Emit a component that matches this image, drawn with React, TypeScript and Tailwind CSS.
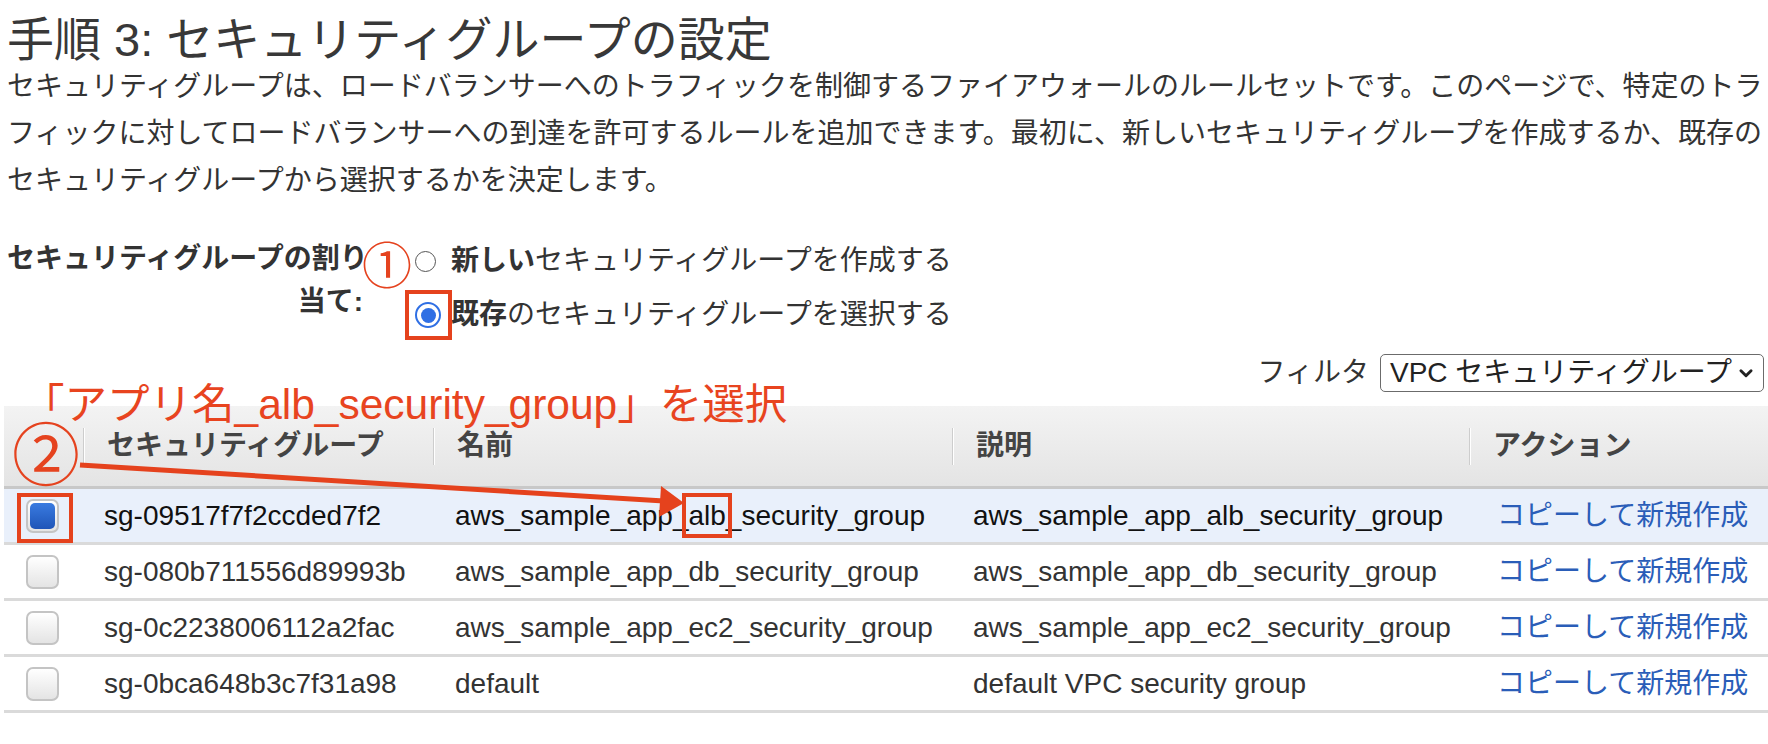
import React from 'react';

const rows = [
  { id: 'sg-09517f7f2ccded7f2', name: 'aws_sample_app_alb_security_group', desc: 'aws_sample_app_alb_security_group', selected: true },
  { id: 'sg-080b711556d89993b', name: 'aws_sample_app_db_security_group', desc: 'aws_sample_app_db_security_group', selected: false },
  { id: 'sg-0c2238006112a2fac', name: 'aws_sample_app_ec2_security_group', desc: 'aws_sample_app_ec2_security_group', selected: false },
  { id: 'sg-0bca648b3c7f31a98', name: 'default', desc: 'default VPC security group', selected: false },
];

const cols = 'grid grid-cols-[79px_350px_519px_517px_1fr]';

const HeaderCell = ({ label, first }: { label?: string; first?: boolean }) => (
  <div className="flex items-center h-full">
    {!first && <div className="h-[37px] w-[2px] bg-white border-l border-[#cdcdcd]" />}
    {label && <span className="pl-[22px] font-bold text-[#444]">{label}</span>}
  </div>
);

const Checkbox = ({ checked }: { checked: boolean }) => (
  <div className="w-[33px] h-[34px] rounded-[7px] border-2 border-[#c4c4c4] bg-gradient-to-b from-white to-[#e4e4e4] flex items-center justify-center">
    {checked && <div className="w-[25px] h-[26px] rounded-[5px] bg-gradient-to-b from-[#3a7be0] to-[#1f55b8]" />}
  </div>
);

export default function App() {
  return (
    <div className="relative w-[1768px] h-[744px] overflow-hidden bg-white text-[#333] font-['Liberation_Sans','Noto_Sans_CJK_JP',sans-serif]">
      <div className="pl-[7px]">
        <h1 className="pt-[17px] text-[47px] leading-[46px] text-[#383838]">手順 3: セキュリティグループの設定</h1>
        <p className="text-[28px] leading-[47px] whitespace-nowrap">
          セキュリティグループは、ロードバランサーへのトラフィックを制御するファイアウォールのルールセットです。このページで、特定のトラ
          <br />
          フィックに対してロードバランサーへの到達を許可するルールを追加できます。最初に、新しいセキュリティグループを作成するか、既存の
          <br />
          セキュリティグループから選択するかを決定します。
        </p>

        <div className="mt-[30px] flex items-start">
          <div className="w-[356px] mt-[3px] text-right text-[28px] leading-[43px] font-bold text-[#333] whitespace-nowrap">
            セキュリティグループの割り
            <br />
            当て:
          </div>
          <div className="ml-[52px] flex flex-col text-[28px]">
            <label className="h-[54px] flex items-center">
              <span className="w-[36px] flex items-center">
                <span className="w-[21px] h-[21px] rounded-full border-[1.5px] border-[#555]" />
              </span>
              <span><b>新しい</b>セキュリティグループを作成する</span>
            </label>
            <label className="h-[54px] flex items-center">
              <span className="w-[36px] flex items-center">
                <span className="w-[26px] h-[26px] rounded-full border-[2.5px] border-[#2f6fe4] bg-white flex items-center justify-center">
                  <span className="w-[15px] h-[15px] rounded-full bg-[#2f6fe4]" />
                </span>
              </span>
              <span><b>既存</b>のセキュリティグループを選択する</span>
            </label>
          </div>
        </div>
      </div>

      <div className="mt-[12px] h-[38px] flex items-center justify-end pr-[4px] text-[28px] leading-[34px]">
        <span className="mr-[11px] text-[#333]">フィルタ</span>
        <div className="w-[384px] h-[38px] border-[1.5px] border-[#6b6b6b] rounded-[5px] flex items-center justify-between pl-[9px] pr-[8px] text-[#222]">
          <span>VPC セキュリティグループ</span>
          <svg width="18" height="18" viewBox="0 0 16 16" fill="none">
            <path d="M3.5 6 L8 10.5 L12.5 6" stroke="#222" strokeWidth="2.6" strokeLinecap="round" strokeLinejoin="round" />
          </svg>
        </div>
      </div>

      <div className="mt-[14px] ml-[4px] text-[28px]">
        <div className={`${cols} h-[83px] bg-gradient-to-b from-[#f3f3f3] to-[#e4e4e4] border-b-[3px] border-[#c8c8c8]`}>
          <HeaderCell first />
          <HeaderCell label="セキュリティグループ" />
          <HeaderCell label="名前" />
          <HeaderCell label="説明" />
          <HeaderCell label="アクション" />
        </div>
        {rows.map((r) => (
          <div
            key={r.id}
            className={`${cols} h-[56px] border-b-[3px] border-[#dadada] items-center ${r.selected ? 'bg-[#e9f0fb] text-[#111]' : 'bg-white text-[#333]'}`}
          >
            <div className="pl-[22px]"><Checkbox checked={r.selected} /></div>
            <div className="pl-[21px]">{r.id}</div>
            <div className="pl-[22px]">{r.name}</div>
            <div className="pl-[21px]">{r.desc}</div>
            <div className="pl-[28px] text-[#2a5db8]">コピーして新規作成</div>
          </div>
        ))}
      </div>

      {/* annotations */}
      <span className="absolute left-[362px] top-[232px] text-[50px] leading-[60px] text-[#e5431f] font-['Noto_Sans_CJK_JP',sans-serif]">①</span>
      <div className="absolute left-[405px] top-[290px] w-[47px] h-[50px] border-4 border-[#e5421d]" />

      <span className="absolute left-[22px] top-[378px] text-[42.5px] leading-[54px] text-[#e8441f] whitespace-nowrap">「アプリ名_alb_security_group」を選択</span>
      <span className="absolute left-[12px] top-[413px] text-[68px] leading-[76px] text-[#e5431f] font-['Noto_Sans_CJK_JP',sans-serif]">②</span>

      <svg className="absolute left-0 top-0" width="1768" height="744" viewBox="0 0 1768 744">
        <line x1="80" y1="465" x2="664" y2="501" stroke="#e5421d" strokeWidth="5" />
        <polygon points="684,503 661,486 659,517" fill="#e5421d" />
      </svg>
      <div className="absolute left-[682px] top-[493px] w-[50px] h-[45px] border-4 border-[#e5421d]" />
      <div className="absolute left-[17px] top-[493px] w-[56px] h-[50px] border-4 border-[#e5421d]" />
    </div>
  );
}
